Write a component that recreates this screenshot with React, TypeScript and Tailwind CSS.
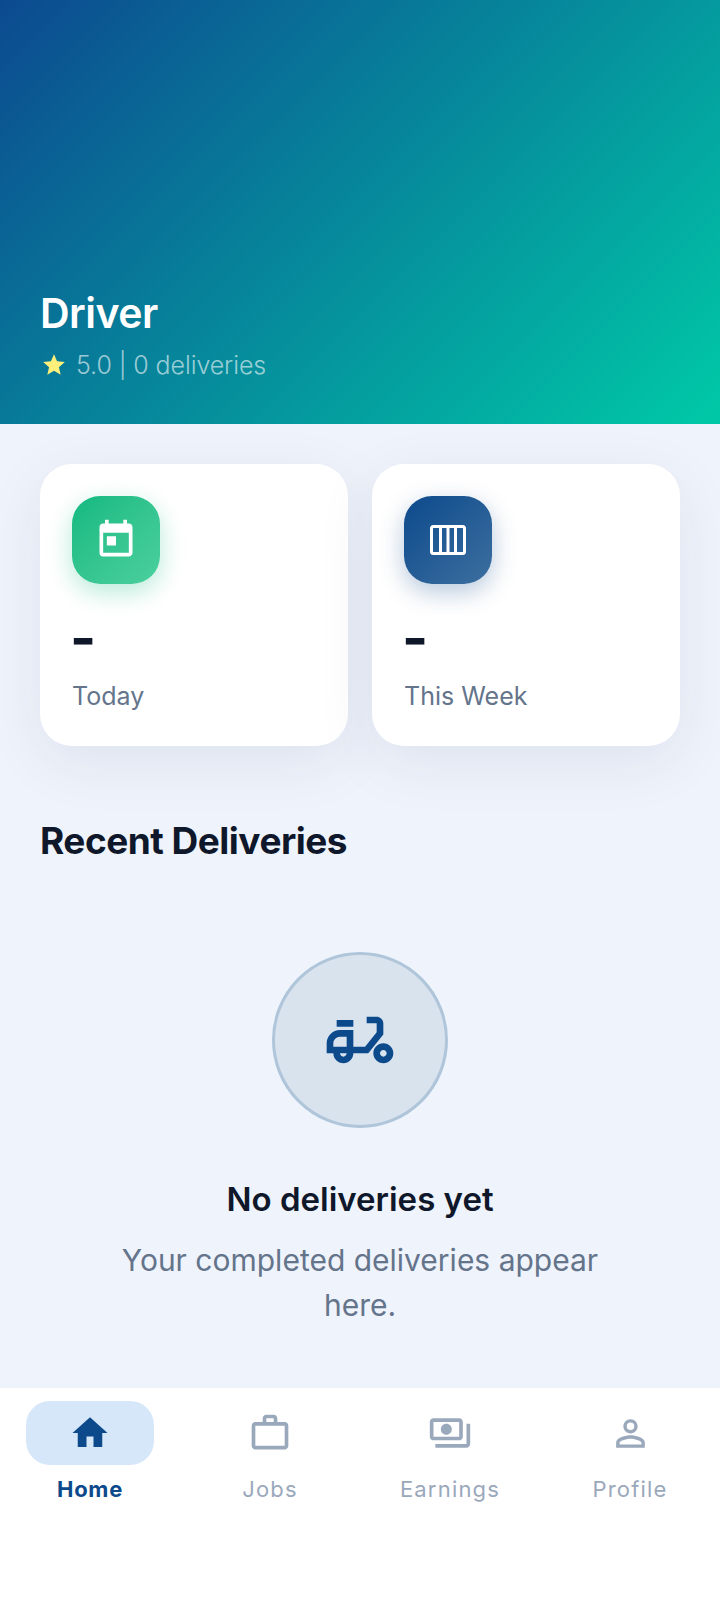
import React from 'react';
import {
  MdHome,
  MdOutlineMoped,
  MdOutlinePayments,
  MdOutlinePersonOutline,
  MdStar,
  MdToday,
  MdWorkOutline,
} from 'react-icons/md';

const font = "font-['Inter','Noto_Sans',sans-serif]";

const tabs = [
  { label: 'Home', Icon: MdHome, size: 42, active: true },
  { label: 'Jobs', Icon: MdWorkOutline, size: 44, active: false },
  { label: 'Earnings', Icon: MdOutlinePayments, size: 44, active: false },
  { label: 'Profile', Icon: MdOutlinePersonOutline, size: 43, active: false },
];

const WeekIcon = () => (
  <svg width="36" height="30" viewBox="0 0 36 30" fill="none" stroke="currentColor" strokeWidth="3">
    <rect x="1.5" y="1.5" width="33" height="27" rx="2" />
    <path d="M10.5 1.5v27M18 1.5v27M25.5 1.5v27" />
  </svg>
);

const App: React.FC = () => {
  return (
    <div className={`${font} flex h-[1604px] w-[720px] flex-col overflow-hidden bg-[#eff3fb]`}>
      {/* Header */}
      <div className="flex h-[424px] shrink-0 flex-col justify-end bg-[linear-gradient(135deg,#0c4a90,#00c9a7)] px-10 pb-[41px]">
        <h1 className="text-[41px] leading-[56px] font-semibold tracking-[-0.5px] text-white">Driver</h1>
        <div className="mt-[6px] flex items-center">
          <MdStar size={26} className="mr-[9px] ml-[1px] text-[#fdf07a]" />
          <span className="text-[25px] leading-[36px] font-light tracking-[-0.1px] text-white/60">5.0 | 0 deliveries</span>
        </div>
      </div>

      {/* Stat cards */}
      <div className="flex gap-6 px-10 pt-10">
        <div className="flex h-[282px] flex-1 flex-col rounded-[32px] bg-white p-8 shadow-[0_16px_60px_rgba(15,40,90,0.08)]">
          <div className="flex h-[88px] w-[88px] items-center justify-center rounded-[28px] bg-gradient-to-br from-[#10b981] to-[#4ad09e] shadow-[0_8px_24px_rgba(16,185,129,0.3)]">
            <MdToday size={44} className="text-white" />
          </div>
          <p className="mt-[26px] -ml-[2px] h-[56px] text-[56px] leading-[56px] font-bold text-[#0f172a]">-</p>
          <p className="mt-[12px] text-[25px] leading-[36px] text-[#64748b]">Today</p>
        </div>
        <div className="flex h-[282px] flex-1 flex-col rounded-[32px] bg-white p-8 shadow-[0_16px_60px_rgba(15,40,90,0.08)]">
          <div className="flex h-[88px] w-[88px] items-center justify-center rounded-[28px] bg-[linear-gradient(135deg,#0c4a8c,#3d6f9f)] text-white shadow-[0_8px_24px_rgba(12,74,140,0.3)]">
            <WeekIcon />
          </div>
          <p className="mt-[26px] -ml-[2px] h-[56px] text-[56px] leading-[56px] font-bold text-[#0f172a]">-</p>
          <p className="mt-[12px] text-[25px] leading-[36px] text-[#64748b]">This Week</p>
        </div>
      </div>

      {/* Recent deliveries */}
      <div className="flex flex-1 flex-col px-10 pt-[69px]">
        <h2 className="text-[37px] leading-[52px] font-bold tracking-[-0.5px] text-[#0f172a]">Recent Deliveries</h2>
        <div className="mt-[85px] flex flex-col items-center">
          <div className="flex h-[176px] w-[176px] items-center justify-center rounded-full border-[3px] border-[#afc5da] bg-[#d9e3ee]">
            <MdOutlineMoped size={80} className="text-[#0c4a8c]" />
          </div>
          <p className="mt-[47px] text-[33px] leading-[48px] font-semibold text-[#0f172a]">No deliveries yet</p>
          <p className="mt-[15px] w-[520px] text-center text-[30px] leading-[45px] font-normal text-[#64748b]">
            Your completed deliveries appear here.
          </p>
        </div>
      </div>

      {/* Bottom nav */}
      <div className="flex h-[216px] shrink-0 items-start bg-white pt-[13px]">
        {tabs.map(({ label, Icon, size, active }) => (
          <div key={label} className="flex flex-1 flex-col items-center">
            <div className={`flex h-16 w-32 items-center justify-center rounded-3xl ${active ? 'bg-[#d6e7fa]' : ''}`}>
              <Icon size={size} className={active ? 'text-[#0c4a8c]' : 'text-[#9aa8bc]'} />
            </div>
            <span
              className={`mt-[8px] text-[22px] leading-[32px] ${
                active ? 'font-bold tracking-[0.7px] text-[#0c4a8c]' : 'tracking-[1.2px] text-[#9aa8bc]'
              }`}
            >
              {label}
            </span>
          </div>
        ))}
      </div>
    </div>
  );
};

export default App;
